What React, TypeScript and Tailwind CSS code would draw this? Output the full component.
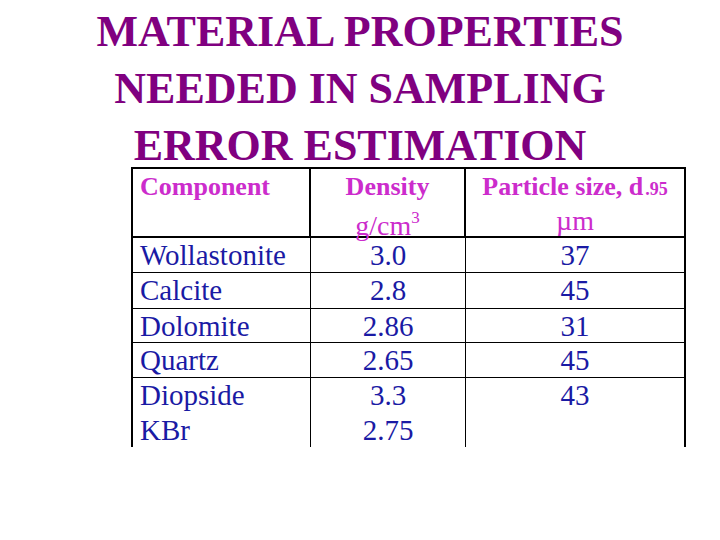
const rows = [
  { name: 'Wollastonite', density: '3.0', size: '37', h: 'h-[35px]', line: true },
  { name: 'Calcite', density: '2.8', size: '45', h: 'h-[36px]', line: true },
  { name: 'Dolomite', density: '2.86', size: '31', h: 'h-[34px]', line: true },
  { name: 'Quartz', density: '2.65', size: '45', h: 'h-[35px]', line: true },
  { name: 'Diopside', density: '3.3', size: '43', h: 'h-[35px]', line: false },
  { name: 'KBr', density: '2.75', size: '', h: 'h-[34px]', line: false },
];

const App = () => {
  return (
    <div
      className="w-[720px] h-[540px] bg-white overflow-hidden"
      style={{ fontFamily: '"Liberation Serif", "Times New Roman", serif' }}
    >
      {/* Title */}
      <h1 className="h-[167px] pt-[3px] text-center text-[44px] leading-[57px] font-bold text-[#800080]">
        MATERIAL PROPERTIES
        <br />
        NEEDED IN SAMPLING
        <br />
        ERROR ESTIMATION
      </h1>

      {/* Table */}
      <div className="ml-[131px] w-[555px] border-t-2 border-l-2 border-r-2 border-black">
        <div className="flex h-[69px] border-b-2 border-black text-[26px] leading-[31px] text-[#cc2ccc]">
          <div className="w-[178px] border-r-2 border-black pl-[7px] pt-[2px] font-bold">Component</div>
          <div className="w-[155px] border-r-2 border-black pt-[2px] text-center">
            <div className="font-bold">Density</div>
            <div className="text-[28px]">
              g/cm<span className="text-[17px] align-[12px]">3</span>
            </div>
          </div>
          <div className="flex-1 pt-[2px] text-center">
            <div className="font-bold">
              Particle size, d<span className="text-[18px] ml-[2px]">.95</span>
            </div>
            <div className="text-[28px]">µm</div>
          </div>
        </div>

        {rows.map((r) => (
          <div
            key={r.name}
            className={`flex ${r.h} ${r.line ? 'border-b border-black' : ''} text-[29px] leading-[34px] text-[#1a1aa4]`}
          >
            <div className="w-[178px] border-r border-black pl-[7px]">{r.name}</div>
            <div className="w-[155px] border-r border-black text-center">{r.density}</div>
            <div className="flex-1 text-center">{r.size}</div>
          </div>
        ))}
      </div>
    </div>
  );
};

export default App;
